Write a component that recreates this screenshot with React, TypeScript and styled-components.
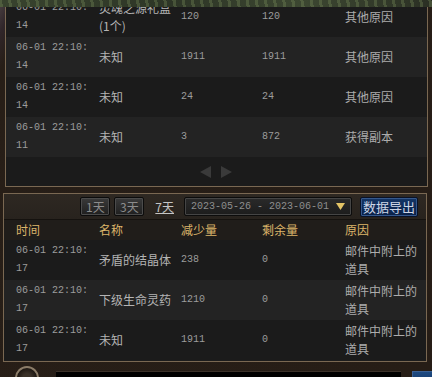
import React from 'react';
import styled, { createGlobalStyle } from 'styled-components';

const GlobalStyle = createGlobalStyle`
  html, body {
    margin: 0;
    padding: 0;
  }
  body {
    width: 432px;
    height: 377px;
    overflow: hidden;
    background: #261d16;
    font-family: "Noto Sans CJK SC", "Liberation Sans", sans-serif;
  }
`;

const Page = styled.div`
  width: 432px;
  height: 377px;
  overflow: hidden;
  display: flex;
  flex-direction: column;
  background: linear-gradient(115deg, #4a4042 0px, #30262a 14px, #271e17 30px, #261d16 100%);
`;

const Scenery = styled.div`
  height: 7px;
  flex-shrink: 0;
  background:
    repeating-linear-gradient(80deg, rgba(120, 140, 90, 0.35) 0 3px, transparent 3px 9px),
    linear-gradient(90deg, #38432e, #2d3526 40%, #3c4731 70%, #2b3024);
`;

const TopPanel = styled.div`
  box-sizing: border-box;
  height: 180px;
  margin: 0 4px 0 5px;
  border: 1px solid #7a6852;
  border-top: none;
  background: #1b1b1b;
  overflow: hidden;
  display: flex;
  flex-direction: column;
  flex-shrink: 0;
`;

const ScrolledList = styled.div`
  margin-top: -10px;
`;

const Pager = styled.div`
  flex: 1;
  display: flex;
  justify-content: center;
  align-items: center;
  gap: 10px;
  padding-right: 1px;
`;

const BottomPanel = styled.div`
  box-sizing: border-box;
  margin: 6px 5px 0 3px;
  border: 1px solid #7a6852;
  background: #1c1c1c;
  padding-bottom: 1px;
  flex-shrink: 0;
`;

const Toolbar = styled.div`
  height: 25px;
  display: flex;
  align-items: center;
  justify-content: flex-end;
  padding-right: 8px;
  background: linear-gradient(180deg, #2e2822, #28231e);
  border-bottom: 1px solid #15120f;
`;

const DayButton = styled.div<{ $gap: number }>`
  box-sizing: border-box;
  width: 30px;
  height: 19px;
  margin-left: ${p => p.$gap}px;
  display: flex;
  align-items: center;
  justify-content: center;
  font-size: 12px;
  color: #8c8c8c;
  background: linear-gradient(180deg, #3a3a3a, #1f1f1f);
  border: 1px solid #0c0c0c;
  border-radius: 2px;
  box-shadow: inset 0 0 0 1px #4b4b4b;
`;

const DayLink = styled.div`
  margin-left: 11px;
  font-size: 12px;
  line-height: 19px;
  color: #c4c4c4;
  text-decoration: underline;
`;

const DatePicker = styled.div`
  box-sizing: border-box;
  width: 168px;
  height: 19px;
  margin-left: 10px;
  padding: 0 6px;
  display: flex;
  align-items: center;
  justify-content: space-between;
  background: linear-gradient(180deg, #2a2a2a, #1c1c1c);
  border: 1px solid #0c0c0c;
  border-radius: 2px;
  box-shadow: inset 0 0 0 1px #454545;
  font-family: "Liberation Mono", monospace;
  font-size: 10px;
  color: #8e8e8e;
`;

const ExportButton = styled.div`
  box-sizing: border-box;
  width: 58px;
  height: 20px;
  margin-left: 8px;
  display: flex;
  align-items: center;
  justify-content: center;
  font-size: 13px;
  color: #cdd6e6;
  background: linear-gradient(180deg, #143667, #0a2148);
  border: 1px solid #0a1226;
  border-radius: 2px;
  box-shadow: inset 0 0 0 1px #35588c;
`;

const Grid = styled.div<{ $alt?: boolean; $inset: number }>`
  display: grid;
  grid-template-columns: 83px 82px 81px 83px 1fr;
  align-items: center;
  padding-left: ${p => p.$inset}px;
  height: 40px;
  background: ${p => (p.$alt ? '#232323' : '#1b1b1b')};
`;

const HeaderRow = styled(Grid)`
  height: 20px;
  background: #201d1a;
`;

const HeadCell = styled.div`
  padding-left: 10px;
  font-size: 12px;
  line-height: 20px;
  color: #ddb56a;
`;

const MonoCell = styled.div<{ $wrap?: boolean }>`
  padding-left: 10px;
  font-family: "Liberation Mono", monospace;
  font-size: 10px;
  line-height: 18px;
  color: #9c9c9c;
  word-break: ${p => (p.$wrap ? 'break-all' : 'normal')};
`;

const TextCell = styled.div`
  padding-left: 10px;
  padding-right: 6px;
  font-size: 12px;
  line-height: 18px;
  color: #acacac;
`;

const NameCell = styled(TextCell)`
  padding-right: 0;
  color: #b4b4b4;
`;

const BottomBar = styled.div`
  display: flex;
  align-items: flex-start;
  padding: 4px 0 0 15px;
`;

const Emblem = styled.div`
  box-sizing: border-box;
  width: 24px;
  height: 24px;
  border-radius: 50%;
  border: 2px solid #8b7c68;
  background: radial-gradient(circle, #3a3128 30%, #1c1611 70%);
  flex-shrink: 0;
`;

const ChatInput = styled.div`
  width: 345px;
  height: 20px;
  margin: 5px 0 0 17px;
  background: #000;
  border-top: 1px solid #3b3129;
  flex-shrink: 0;
`;

const SendButton = styled.div`
  width: 30px;
  height: 20px;
  margin: 5px 0 0 11px;
  background: linear-gradient(180deg, #1d4a82, #102b55);
  border: 1px solid #3a5f93;
  flex-shrink: 0;
`;

interface Record {
  time: string;
  name: string;
  a: string;
  b: string;
  reason: string;
}

const topRecords: Record[] = [
  { time: '06-01 22:10:14', name: '灵魂之源礼盒(1个)', a: '120', b: '120', reason: '其他原因' },
  { time: '06-01 22:10:14', name: '未知', a: '1911', b: '1911', reason: '其他原因' },
  { time: '06-01 22:10:14', name: '未知', a: '24', b: '24', reason: '其他原因' },
  { time: '06-01 22:10:11', name: '未知', a: '3', b: '872', reason: '获得副本' },
];

const bottomRecords: Record[] = [
  { time: '06-01 22:10:17', name: '矛盾的结晶体', a: '238', b: '0', reason: '邮件中附上的道具' },
  { time: '06-01 22:10:17', name: '下级生命灵药', a: '1210', b: '0', reason: '邮件中附上的道具' },
  { time: '06-01 22:10:17', name: '未知', a: '1911', b: '0', reason: '邮件中附上的道具' },
];

const RecordRow: React.FC<{ record: Record; alt: boolean; inset: number }> = ({ record, alt, inset }) => (
  <Grid $alt={alt} $inset={inset}>
    <MonoCell $wrap>{record.time}</MonoCell>
    <NameCell>{record.name}</NameCell>
    <MonoCell>{record.a}</MonoCell>
    <MonoCell>{record.b}</MonoCell>
    <TextCell>{record.reason}</TextCell>
  </Grid>
);

const Arrow: React.FC<{ dir: 'left' | 'right' }> = ({ dir }) => (
  <svg width="11" height="12" viewBox="0 0 11 12">
    {dir === 'left' ? (
      <polygon points="11,0 11,12 0,6" fill="#3a3a3a" />
    ) : (
      <polygon points="0,0 0,12 11,6" fill="#3a3a3a" />
    )}
  </svg>
);

const App: React.FC = () => (
  <Page>
    <GlobalStyle />
    <Scenery />
    <TopPanel>
      <ScrolledList>
        {topRecords.map((r, i) => (
          <RecordRow key={i} record={r} alt={i % 2 === 1} inset={0} />
        ))}
      </ScrolledList>
      <Pager>
        <Arrow dir="left" />
        <Arrow dir="right" />
      </Pager>
    </TopPanel>
    <BottomPanel>
      <Toolbar>
        <DayButton $gap={0}>1天</DayButton>
        <DayButton $gap={4}>3天</DayButton>
        <DayLink>7天</DayLink>
        <DatePicker>
          <span>2023-05-26 - 2023-06-01</span>
          <svg width="9" height="7" viewBox="0 0 9 7">
            <polygon points="0,0 9,0 4.5,7" fill="#e3c466" />
          </svg>
        </DatePicker>
        <ExportButton>数据导出</ExportButton>
      </Toolbar>
      <HeaderRow $inset={2}>
        <HeadCell>时间</HeadCell>
        <HeadCell>名称</HeadCell>
        <HeadCell>减少量</HeadCell>
        <HeadCell>剩余量</HeadCell>
        <HeadCell>原因</HeadCell>
      </HeaderRow>
      {bottomRecords.map((r, i) => (
        <RecordRow key={i} record={r} alt={i % 2 === 1} inset={2} />
      ))}
    </BottomPanel>
    <BottomBar>
      <Emblem />
      <ChatInput />
      <SendButton />
    </BottomBar>
  </Page>
);

export default App;
